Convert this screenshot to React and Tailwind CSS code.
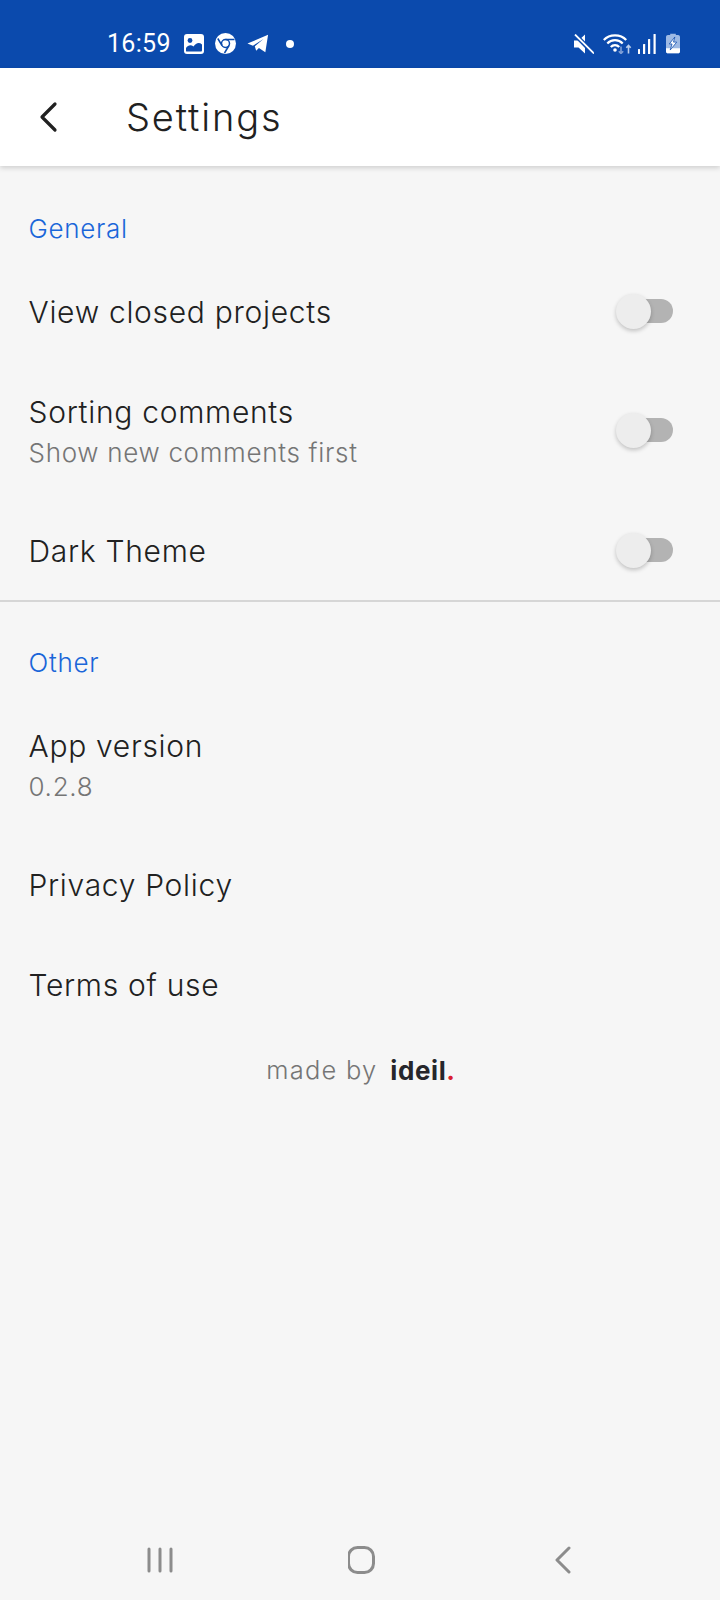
function ImageIcon() {
    return (
        <svg width="20" height="20" viewBox="0 0 20 20">
            <rect x="0" y="0" width="20" height="20" rx="3" fill="#fff" />
            <circle cx="6" cy="6.5" r="2.4" fill="#0b4aad" />
            <path d="M2 17 V14 C4 11 7 10.5 9.5 12.5 C12 9 15 8 18 10.5 V16 C18 17 17.5 17.5 17 17.5 H3 C2.5 17.5 2 17.5 2 17 Z" fill="#0b4aad" />
        </svg>
    );
}

function ChromeIcon() {
    return (
        <svg width="21" height="21" viewBox="0 0 21 21">
            <circle cx="10.5" cy="10.5" r="10.5" fill="#fff" />
            <circle cx="10.5" cy="10.5" r="4" fill="none" stroke="#0b4aad" strokeWidth="1.5" />
            <path d="M10.5 6.5 H19.5 M7 12.5 L2.8 5.5 M14 12.5 L9.5 20" stroke="#0b4aad" strokeWidth="1.5" fill="none" />
        </svg>
    );
}

function TelegramIcon() {
    return (
        <svg width="22" height="19" viewBox="0 0 24 20">
            <path d="M0.5 10 L23 0.5 L20 19.5 L13 15 L10 18 L8.5 13 L18 5 L6.5 12.5 Z" fill="#fff" />
        </svg>
    );
}

function MuteIcon() {
    return (
        <svg width="20" height="20" viewBox="0 0 20 20">
            <path d="M0 6.5 H4.5 L11 0.5 V19.5 L4.5 13.5 H0 Z" fill="#fff" />
            <path d="M0.5 0 L20 20" stroke="#0b4aad" strokeWidth="4.5" />
            <path d="M1 0.5 L20 19.5" stroke="#fff" strokeWidth="1.8" />
        </svg>
    );
}

function WifiIcon() {
    return (
        <svg width="29" height="21" viewBox="0 0 29 21" fill="none">
            <path d="M0.8 7 C6.5 0.8 17.5 0.8 23.2 7" stroke="#fff" strokeWidth="2.2" />
            <path d="M4.3 10.5 C8.5 6 15.5 6 19.7 10.5" stroke="#fff" strokeWidth="2.2" />
            <path d="M7.8 14 C10 11.5 14 11.5 16.2 14" stroke="#fff" strokeWidth="2.2" />
            <circle cx="12" cy="17" r="1.8" fill="#fff" />
            <path d="M18 13.5 V20.5 M15.8 18.3 L18 20.5 L20.2 18.3" stroke="#7f9fd6" strokeWidth="1.6" />
            <path d="M25.5 20.5 V12.5 M23.3 14.7 L25.5 12.5 L27.7 14.7" stroke="#b9cdec" strokeWidth="1.6" />
        </svg>
    );
}

function SignalIcon() {
    return (
        <svg width="18" height="20" viewBox="0 0 18 20" fill="#fff">
            <rect x="0" y="15" width="2" height="5" rx="0.5" />
            <rect x="5" y="10" width="2.2" height="10" rx="0.5" />
            <rect x="10" y="5" width="2.2" height="15" rx="0.5" />
            <rect x="15.5" y="0" width="2.2" height="20" rx="0.5" />
        </svg>
    );
}

function BatteryIcon() {
    return (
        <svg width="14" height="21" viewBox="0 0 15 21">
            <path d="M4.5 0 H10.5 V1.5 H13 C14 1.5 15 2.5 15 3.5 V19 C15 20 14 21 13 21 H2 C1 21 0 20 0 19 V3.5 C0 2.5 1 1.5 2 1.5 H4.5 Z" fill="#9db9e4" />
            <path d="M0 15.5 H15 V19 C15 20 14 21 13 21 H2 C1 21 0 20 0 19 Z" fill="#fff" />
            <path d="M9.5 3.5 L3.5 11 H6.5 L4.5 17.5 L11.5 9 H8 Z" fill="#fff" stroke="#0b4aad" strokeWidth="0.8" />
        </svg>
    );
}

function StatusBar() {
    return (
        <div className="h-[68px] bg-[#0b4aad] flex items-center justify-between pt-[19px] pl-[107px] pr-[40px] text-white">
            <div className="flex items-center">
                <span className="text-[25px] leading-none tracking-[0.3px]" style={{ fontFamily: 'Roboto, sans-serif' }}>16:59</span>
                <div className="ml-[13px] flex items-center gap-[11px]">
                    <ImageIcon />
                    <ChromeIcon />
                    <TelegramIcon />
                </div>
                <span className="ml-[17px] w-2 h-2 rounded-full bg-white" />
            </div>
            <div className="flex items-center">
                <MuteIcon />
                <div className="ml-[9px]"><WifiIcon /></div>
                <div className="ml-[6px]"><SignalIcon /></div>
                <div className="ml-[10px]"><BatteryIcon /></div>
            </div>
        </div>
    );
}

function Switch() {
    return (
        <div className="relative w-[57px] h-[35px] shrink-0">
            <div className="absolute left-[16px] right-0 top-[5px] h-[24px] rounded-full bg-[#b3b3b3]" />
            <div className="absolute left-0 top-0 w-[35px] h-[35px] rounded-full bg-[#ededed] shadow-[0_2px_4px_rgba(0,0,0,0.22)]" />
        </div>
    );
}

function Row({ title, sub, toggle }) {
    return (
        <div className="flex items-center justify-between pl-[28.5px] pr-[47px] py-[30px]">
            <div className={toggle ? 'translate-y-[1px]' : ''}>
                <div className="text-[30px] leading-[40px] tracking-[0.7px] font-[350] text-[#212121]">{title}</div>
                {sub && <div className="translate-y-[1px] text-[26px] leading-[39px] tracking-[0.7px] font-[350] text-[#757575]">{sub}</div>}
            </div>
            {toggle && <Switch />}
        </div>
    );
}

function SectionTitle({ children }) {
    return (
        <div className="px-[28.5px] text-[26px] leading-[34px] tracking-[0.7px] font-[350] text-[#1a66d9]">{children}</div>
    );
}

function App() {
    return (
        <div
            className="w-[720px] h-[1600px] bg-[#f6f6f6] flex flex-col overflow-hidden"
            style={{ fontFamily: 'Inter, sans-serif' }}
        >
            <StatusBar />

            {/* Header */}
            <div className="h-[98px] bg-white flex items-center pl-[38px] shadow-[0_2px_5px_rgba(0,0,0,0.16)] relative">
                <svg width="20" height="32" viewBox="0 0 20 32" fill="none" stroke="#212121" strokeWidth="3.2" strokeLinecap="round" strokeLinejoin="round">
                    <path d="M17 3 L4 16 L17 29" />
                </svg>
                <div className="ml-[68px] text-[38px] tracking-[1.85px] font-[350] text-[#212121]">Settings</div>
            </div>

            {/* General */}
            <div className="pt-[46px] border-b-2 border-[#d6d6d6]">
                <SectionTitle>General</SectionTitle>
                <div className="mt-[15px]">
                    <Row title="View closed projects" toggle />
                    <Row title="Sorting comments" sub="Show new comments first" toggle />
                    <Row title="Dark Theme" toggle />
                </div>
            </div>

            {/* Other */}
            <div className="pt-[44px]">
                <SectionTitle>Other</SectionTitle>
                <div className="mt-[16px]">
                    <Row title="App version" sub="0.2.8" />
                    <Row title="Privacy Policy" />
                    <Row title="Terms of use" />
                </div>
            </div>

            {/* Made by */}
            <div className="mt-[16px] pl-[2px] flex items-center justify-center">
                <span className="text-[25.5px] tracking-[1.2px] text-[#757575] font-light">made by</span>
                <span className="ml-[13px] text-[26px] font-bold tracking-[0.6px] text-[#26262b]">ideil<span className="text-[#d9202f]">.</span></span>
            </div>

            {/* Nav bar */}
            <div className="mt-auto h-[80px] flex items-center justify-between pl-[147px] pr-[148px]">
                <svg width="26" height="26" viewBox="0 0 26 26" fill="none" stroke="#8c8c8c" strokeWidth="3" strokeLinecap="round">
                    <path d="M2 2 V24 M13 2 V24 M24 2 V24" />
                </svg>
                <svg width="30" height="30" viewBox="0 0 30 30" fill="none" stroke="#8c8c8c" strokeWidth="3">
                    <rect x="0.5" y="2.5" width="25" height="25" rx="9" />
                </svg>
                <svg width="20" height="28" viewBox="0 0 20 28" fill="none" stroke="#8c8c8c" strokeWidth="3" strokeLinecap="round" strokeLinejoin="round">
                    <path d="M17 2 L5 14 L17 26" />
                </svg>
            </div>
        </div>
    );
}

export default App;
